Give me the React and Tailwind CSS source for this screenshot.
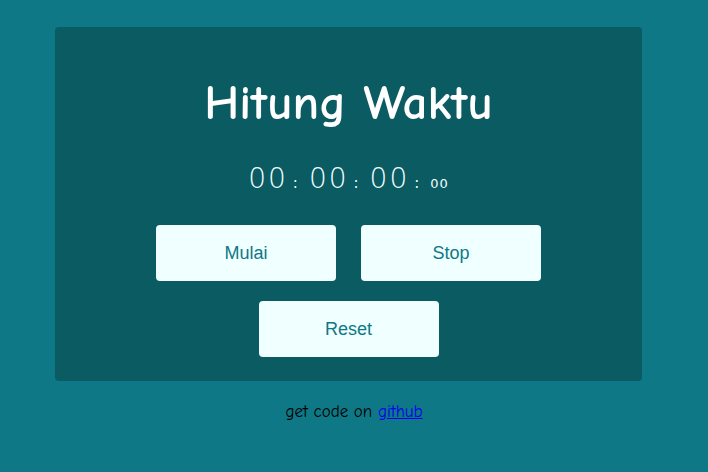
import { useState } from "react";

const comic = { fontFamily: '"Comic Sans MS", "Comic Neue", cursive' };

function Sep() {
  return <span className="ml-[5px] mr-[9px] text-[15px] font-normal">:</span>;
}

export default function App() {
  const [time] = useState({ h: "00", m: "00", s: "00", ms: "00" });

  return (
    <div className="min-h-screen w-full bg-[#0e7886] pt-[27px]" style={comic}>
      <div className="ml-[55px] w-[587px] h-[354px] rounded-[4px] bg-[#0b5b63] flex flex-col items-center pt-[46px]">
        <h1 className="text-[49px] leading-[60px] font-semibold text-white">Hitung Waktu</h1>

        <div
          className="mt-[28px] text-[28px] leading-[36px] font-extralight tracking-[2px] text-[#f0ffff] flex items-baseline"
          style={{ fontFamily: '"DejaVu Sans", sans-serif' }}
        >
          <span>{time.h}</span>
          <Sep />
          <span>{time.m}</span>
          <Sep />
          <span>{time.s}</span>
          <Sep />
          <span className="text-[13px] tracking-[1px] font-normal">{time.ms}</span>
        </div>

        <div
          className="mt-[23px] flex flex-wrap justify-center gap-x-[25px] gap-y-[20px] w-[385px]"
          style={{ fontFamily: '"Liberation Sans", Arial, sans-serif' }}
        >
          <button className="w-[180px] h-[56px] rounded-[4px] bg-[#f0ffff] text-[#0e7886] text-[18px]">
            Mulai
          </button>
          <button className="w-[180px] h-[56px] rounded-[4px] bg-[#f0ffff] text-[#0e7886] text-[18px]">
            Stop
          </button>
          <button className="w-[180px] h-[56px] rounded-[4px] bg-[#f0ffff] text-[#0e7886] text-[18px]">
            Reset
          </button>
        </div>
      </div>

      <p className="mt-[18px] text-center text-[17px] text-black">
        get code on{" "}
        <a href="#" className="text-[#0000ee] underline">
          github
        </a>
      </p>
    </div>
  );
}
